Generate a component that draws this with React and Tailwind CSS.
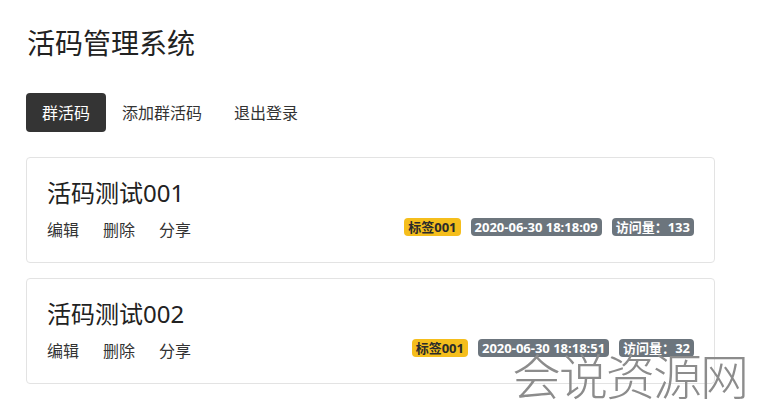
import React from "react";

const font = { fontFamily: '"Noto Sans", "Noto Sans CJK SC", sans-serif' };

function Badge({ color, children }) {
  const cls =
    color === "yellow"
      ? "bg-[#f5be1c] text-[#2b2b2b]"
      : "bg-[#6c757d] text-white";
  return (
    <span className={`${cls} inline-flex items-center h-[18px] px-[4px] rounded-[4px] text-[13px] font-bold leading-none`}>
      {children}
    </span>
  );
}

function Card({ title, date, visits }) {
  return (
    <div className="border border-[#e3e3e3] rounded-[4px] px-[20px] pt-[20px] pb-[20px] bg-white">
      <div className="text-[24px] leading-[29px] text-[#222]">{title}</div>
      <div className="mt-[11px] flex items-center justify-between">
        <div className="flex gap-[24px] text-[16px] leading-[24px] text-[#333]">
          <span>编辑</span>
          <span>删除</span>
          <span>分享</span>
        </div>
        <div className="flex gap-[10px] -mt-[6px]">
          <Badge color="yellow">标签001</Badge>
          <Badge>{date}</Badge>
          <Badge>访问量：{visits}</Badge>
        </div>
      </div>
    </div>
  );
}

export default function App() {
  return (
    <div className="relative w-[760px] h-[410px] bg-white overflow-hidden" style={font}>
      <div className="pl-[26px] pr-[45px] pt-[24px]">
        <h1 className="text-[28px] leading-[38px] text-[#222] pl-[1px]">活码管理系统</h1>
        <nav className="mt-[31px] flex text-[16px] text-[#333]">
          <span className="h-[39px] px-[16px] flex items-center bg-[#343434] text-white rounded-[4px]">群活码</span>
          <span className="h-[39px] px-[16px] flex items-center">添加群活码</span>
          <span className="h-[39px] px-[16px] flex items-center">退出登录</span>
        </nav>
        <div className="mt-[25px] flex flex-col gap-[15px]">
          <Card title="活码测试001" date="2020-06-30 18:18:09" visits="133" />
          <Card title="活码测试002" date="2020-06-30 18:18:51" visits="32" />
        </div>
      </div>
      <div className="absolute left-[512px] top-[346px] text-[49px] leading-[60px] font-light text-[#8c8c8c] tracking-[-2px] whitespace-nowrap">
        会说资源网
      </div>
    </div>
  );
}
